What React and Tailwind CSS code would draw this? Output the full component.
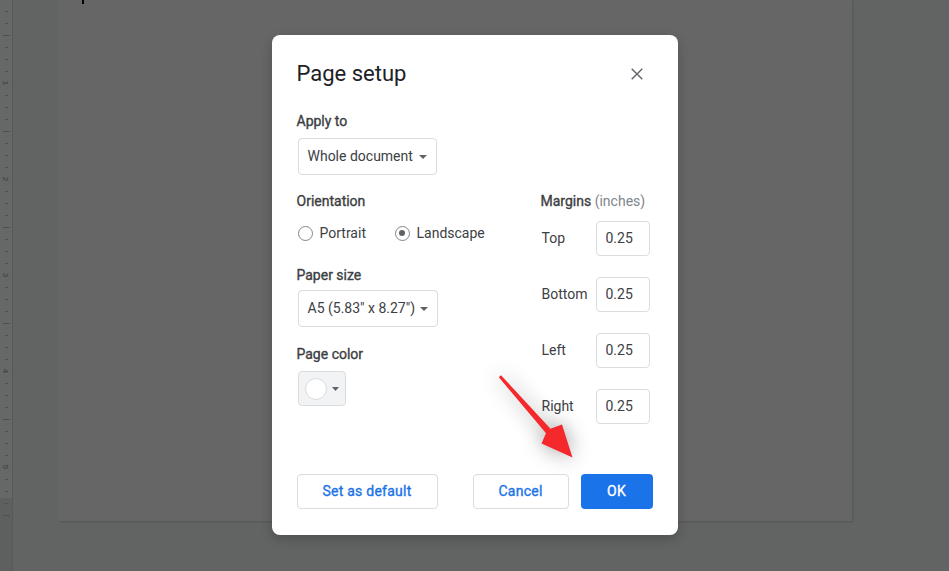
import React from 'react';

const ticks = Array.from({ length: 43 }, (_, k) => k);

function Caret({ w = 8, h = 4 }) {
  return (
    <svg width={w} height={h} viewBox={`0 0 ${w} ${h}`} className="shrink-0">
      <path d={`M0 0 L${w} 0 L${w / 2} ${h} Z`} fill="#5f6368" />
    </svg>
  );
}

function Ruler() {
  return (
    <div className="w-[13px] h-full border-r border-[#575858] shrink-0 bg-[linear-gradient(to_bottom,#666767_498px,#5e6060_498px)] pt-[5px] flex flex-col">
      {ticks.map((k) => {
        const m = k % 8;
        return (
          <div key={k} className="h-[12px] shrink-0 flex items-center">
            {m === 6 ? (
              <span className="ml-[3px] rotate-90 text-[8px] leading-[8px] text-[#3b3940] font-['Liberation_Sans',sans-serif]">
                {(k - 6) / 8 + 1}
              </span>
            ) : m === 2 ? (
              <div className="ml-[3px] w-[7px] h-[1px] bg-[#4f5050]" />
            ) : (
              <div className="ml-[5px] w-[3px] h-[1px] bg-[#4f5050]" />
            )}
          </div>
        );
      })}
    </div>
  );
}

function Select({ label, width }) {
  return (
    <div className={`h-[37px] ${width} border border-[#dadce0] rounded-[4px] flex items-center justify-between pl-[9px] pr-[9px] text-[14px] text-[#3c4043]`}>
      <span>{label}</span>
      <Caret />
    </div>
  );
}

function Radio({ checked, label, className = '' }) {
  return (
    <div className={`flex items-center h-[20px] ${className}`}>
      <div className="w-[15px] h-[15px] rounded-full border border-[#80868b] flex items-center justify-center shrink-0">
        {checked && <div className="w-[6px] h-[6px] rounded-full bg-[#5f6368]" />}
      </div>
      <span className="ml-[7px] text-[14px] text-[#3c4043]">{label}</span>
    </div>
  );
}

function MarginRow({ label, className = '' }) {
  return (
    <div className={`flex items-center h-[35px] ${className}`}>
      <span className="w-[55px] pl-[1px] text-[14px] text-[#3c4043]">{label}</span>
      <div className="w-[54px] h-[35px] border border-[#dadce0] rounded-[4px] flex items-center pl-[9px] text-[14px] text-[#3c4043]">
        0.25
      </div>
    </div>
  );
}

const labelCls = 'text-[14px] leading-[20px] text-[#3c4043] [-webkit-text-stroke:0.35px_#3c4043]';
const btnCls = 'h-[35px] rounded-[4px] text-[14px] tracking-[0.25px] [-webkit-text-stroke:0.35px_currentColor]';

export default function App() {
  return (
    <div className="relative w-[949px] h-[571px] overflow-hidden bg-[#626463] flex font-['Roboto','Liberation_Sans',sans-serif]">
      <Ruler />
      <div className="ml-[45px] w-[794px] h-[521px] bg-[#666666] shadow-[1px_1px_2px_rgba(0,0,0,0.15)] pl-[24px]">
        <div className="w-[2px] h-[4px] bg-black" />
      </div>

      {/* dialog */}
      <div className="absolute inset-0 flex items-start justify-center pt-[35px]">
        <div className="w-[406px] h-[500px] bg-white rounded-[8px] flex flex-col px-[25px] pt-[25px] pb-[26px] shadow-[0_4px_12px_rgba(0,0,0,0.2)]">
          <div className="h-[28px] flex items-center justify-between">
            <h2 className="text-[22px] leading-[28px] text-[#202124]">Page setup</h2>
            <div className="w-[24px] h-[24px] mr-[4px] flex items-center justify-center">
              <svg width="12" height="12" viewBox="0 0 12 12">
                <path d="M0.7 0.7 L11.3 11.3 M11.3 0.7 L0.7 11.3" stroke="#5f6368" strokeWidth="1.4" />
              </svg>
            </div>
          </div>

          <div className={`mt-[23px] ${labelCls}`}>Apply to</div>
          <div className="mt-[7px] ml-[1px]">
            <Select label="Whole document" width="w-[139px]" />
          </div>

          <div className="mt-[16px] flex">
            <div className="w-[244px] flex flex-col">
              <div className={labelCls}>Orientation</div>
              <div className="mt-[12px] flex ml-[1px]">
                <Radio label="Portrait" className="w-[97px]" />
                <Radio checked label="Landscape" />
              </div>
              <div className={`mt-[22px] ${labelCls}`}>Paper size</div>
              <div className="mt-[5px] ml-[1px]">
                <Select label={'A5 (5.83" x 8.27")'} width="w-[140px]" />
              </div>
              <div className={`mt-[17px] ${labelCls}`}>Page color</div>
              <div className="mt-[7px] ml-[1px] w-[48px] h-[35px] bg-[#f1f3f4] border border-[#dadce0] rounded-[4px] flex items-center pl-[6px]">
                <div className="w-[22px] h-[22px] rounded-full bg-white border border-[#dadce0]" />
                <div className="ml-[5px]">
                  <Caret w={7} h={4} />
                </div>
              </div>
            </div>

            <div className="flex flex-col">
              <div className="text-[14px] leading-[20px] text-[#3c4043]">
                <span className="[-webkit-text-stroke:0.35px_#3c4043]">Margins</span>{' '}
                <span className="text-[#80868b]">(inches)</span>
              </div>
              <MarginRow label="Top" className="mt-[10px]" />
              <MarginRow label="Bottom" className="mt-[21px]" />
              <MarginRow label="Left" className="mt-[21px]" />
              <MarginRow label="Right" className="mt-[21px]" />
            </div>
          </div>

          <div className="mt-auto flex items-center">
            <button className={`w-[141px] border border-[#dadce0] text-[#1a73e8] ${btnCls}`}>
              Set as default
            </button>
            <button className={`ml-auto w-[96px] border border-[#dadce0] text-[#1a73e8] ${btnCls}`}>
              Cancel
            </button>
            <button className={`ml-[12px] w-[72px] bg-[#1a73e8] text-white ${btnCls}`}>
              OK
            </button>
          </div>
        </div>
      </div>

      {/* annotation arrow */}
      <svg
        className="absolute inset-0 pointer-events-none drop-shadow-[0_0_10px_rgba(0,0,0,0.4)]"
        width="949"
        height="571"
        viewBox="0 0 949 571"
      >
        <polygon
          points="501,375.2 550.5,428.8 562,424.5 572.5,457.5 541.5,443.5 546,433.2 498.8,377.2"
          fill="#f5282c"
        />
      </svg>
    </div>
  );
}
